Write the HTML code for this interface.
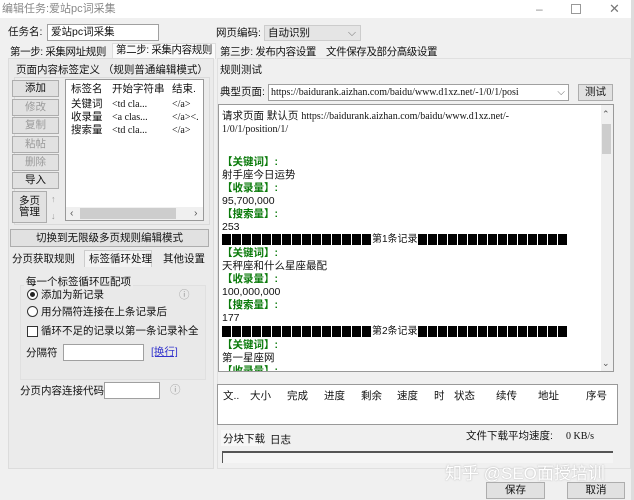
<!DOCTYPE html>
<html><head><meta charset="utf-8"><style>
*{margin:0;padding:0;box-sizing:border-box}
body{width:634px;height:500px;background:#f0f0f0;font-family:"Liberation Sans","Noto Sans CJK SC",sans-serif;font-size:10.5px;line-height:13px;color:#111;position:relative;overflow:hidden}
.a{position:absolute;white-space:nowrap}
.inp{position:absolute;background:#fff;border:1px solid #a0a0a0}
.btn{position:absolute;background:#e1e1e1;border:1px solid #adadad;text-align:center;line-height:15px}
.dis{color:#9a9a9a}
.mono{font-family:"Liberation Serif","Noto Sans CJK SC",serif}
.g{color:#0a7a0a;font-weight:bold}
.bar{font-size:10px;letter-spacing:0}
.blk{display:inline-block;width:9px;height:11px;background:#000;margin-right:1px;vertical-align:middle}
.t{letter-spacing:-0.4px}
</style></head><body>
<div class="a" style="left:0;top:0;width:634px;height:18px;background:#fff"></div>
<div class="a" style="left:2px;top:3px;color:#888;font-size:11px">编辑任务:爱站pc词采集</div>
<div class="a" style="left:536px;top:3px;color:#888;font-size:12px">–</div>
<div class="a" style="left:571px;top:4px;width:10px;height:10px;border:1px solid #999"></div>
<div class="a" style="left:609px;top:2px;color:#777;font-size:13px">✕</div>
<div class="a" style="left:631px;top:0;width:3px;height:500px;background:#ddd"></div>

<div class="a" style="left:8px;top:26px">任务名:</div>
<div class="inp" style="left:47px;top:24px;width:112px;height:17px;padding-left:3px;line-height:15px">爱站pc词采集</div>
<div class="a" style="left:216px;top:27px">网页编码:</div>
<div class="inp" style="left:264px;top:25px;width:97px;height:16px;background:#e5e5e5;border-color:#ccc;padding-left:3px;line-height:14px">自动识别<span style="position:absolute;right:4px;color:#777">⌵</span></div>

<div class="a" style="left:112px;top:43px;width:104px;height:16px;background:#fafafa;border:1px solid #ddd;border-bottom:none"></div>
<div class="a t" style="left:10px;top:46px">第一步: 采集网址规则</div>
<div class="a t" style="left:116px;top:44px">第二步: 采集内容规则</div>
<div class="a t" style="left:220px;top:46px">第三步: 发布内容设置</div>
<div class="a t" style="left:326px;top:46px">文件保存及部分高级设置</div>

<!-- left panel -->
<div class="a" style="left:8px;top:58px;width:206px;height:411px;background:#ebebeb;border:1px solid #dcdcdc"></div>
<div class="a" style="left:14px;top:77px;width:196px;height:148px;border:1px solid #dadada"></div>
<div class="a" style="left:14px;top:64px;background:#ebebeb;padding:0 2px">页面内容标签定义 （规则普通编辑模式）</div>
<div class="btn" style="left:12px;top:80px;width:47px;height:17px">添加</div>
<div class="btn dis" style="left:12px;top:99px;width:47px;height:17px">修改</div>
<div class="btn dis" style="left:12px;top:117px;width:47px;height:17px">复制</div>
<div class="btn dis" style="left:12px;top:136px;width:47px;height:17px">粘帖</div>
<div class="btn dis" style="left:12px;top:154px;width:47px;height:17px">删除</div>
<div class="btn" style="left:12px;top:172px;width:47px;height:17px">导入</div>
<div class="btn" style="left:12px;top:191px;width:35px;height:32px;line-height:11px;padding-top:4px">多页<br>管理</div>
<div class="a dis" style="left:51px;top:193px;font-size:9px">↑</div>
<div class="a dis" style="left:51px;top:210px;font-size:9px">↓</div>
<div class="inp" style="left:65px;top:79px;width:139px;height:142px;border-color:#999"></div>
<div class="a" style="left:71px;top:83px">标签名</div><div class="a" style="left:112px;top:83px">开始字符串</div><div class="a" style="left:172px;top:83px">结束.</div>
<div class="a" style="left:71px;top:98px;line-height:13px">关键词<br>收录量<br>搜索量</div>
<div class="a mono" style="left:112px;top:98px;line-height:13px;font-size:10px">&lt;td cla...<br>&lt;a clas...<br>&lt;td cla...</div>
<div class="a mono" style="left:172px;top:98px;line-height:13px;font-size:10px">&lt;/a&gt;<br>&lt;/a&gt;&lt;.<br>&lt;/a&gt;</div>
<div class="a" style="left:66px;top:207px;width:137px;height:13px;background:#f0f0f0"></div>
<div class="a" style="left:80px;top:208px;width:96px;height:11px;background:#cdcdcd"></div>
<div class="a" style="left:70px;top:207px;color:#555">‹</div><div class="a" style="left:194px;top:207px;color:#555">›</div>
<div class="btn" style="left:10px;top:229px;width:199px;height:18px;line-height:16px">切换到无限级多页规则编辑模式</div>
<div class="a" style="left:12px;top:253px">分页获取规则</div>
<div class="a" style="left:84px;top:250px;width:68px;height:17px;border:1px solid #ccc;border-bottom:none;background:#f3f3f3"></div>
<div class="a" style="left:89px;top:253px">标签循环处理</div>
<div class="a" style="left:163px;top:253px">其他设置</div>
<div class="a" style="left:20px;top:285px;width:186px;height:95px;border:1px solid #e0e0e0;background:#e9e9e9"></div>
<div class="a" style="left:24px;top:276px;background:#ebebeb;padding:0 2px">每一个标签循环匹配项</div>
<div class="a" style="left:27px;top:289px;width:11px;height:11px;border:1px solid #333;border-radius:50%;background:#fff"></div>
<div class="a" style="left:30px;top:292px;width:5px;height:5px;border-radius:50%;background:#222"></div>
<div class="a" style="left:41px;top:289px">添加为新记录</div>
<div class="a" style="left:179px;top:289px;color:#999">ⓘ</div>
<div class="a" style="left:27px;top:306px;width:11px;height:11px;border:1px solid #333;border-radius:50%;background:#fff"></div>
<div class="a" style="left:41px;top:306px">用分隔符连接在上条记录后</div>
<div class="a" style="left:27px;top:326px;width:11px;height:11px;border:1px solid #333;background:#fff"></div>
<div class="a" style="left:41px;top:325px">循环不足的记录以第一条记录补全</div>
<div class="a" style="left:26px;top:347px">分隔符</div>
<div class="inp" style="left:63px;top:344px;width:81px;height:17px"></div>
<div class="a" style="left:151px;top:346px;color:#33c;text-decoration:underline">[换行]</div>
<div class="a" style="left:20px;top:385px">分页内容连接代码</div>
<div class="inp" style="left:104px;top:382px;width:56px;height:17px"></div>
<div class="a" style="left:170px;top:384px;color:#999">ⓘ</div>

<!-- right -->
<div class="a" style="left:217px;top:58px;width:414px;height:411px;border:1px solid #e0e0e0"></div>
<div class="a" style="left:220px;top:64px">规则测试</div>
<div class="a" style="left:220px;top:86px">典型页面:</div>
<div class="inp mono" style="left:268px;top:84px;width:301px;height:17px;font-size:10px;padding-left:2px;line-height:15px;overflow:hidden">https://baidurank.aizhan.com/baidu/www.d1xz.net/-1/0/1/posi<span style="position:absolute;right:3px;color:#666">⌵</span></div>
<div class="btn" style="left:578px;top:84px;width:35px;height:17px">测试</div>
<div class="inp" style="left:218px;top:104px;width:396px;height:268px;border-color:#999;overflow:hidden">
<div class="a" style="left:382px;top:0;width:12px;height:266px;background:#f0f0f0"></div>
<div class="a" style="left:383px;top:19px;width:9px;height:30px;background:#cdcdcd"></div>
<div class="a" style="left:383px;top:3px;font-size:9px;color:#555">⌃</div>
<div class="a" style="left:383px;top:252px;font-size:9px;color:#555">⌄</div>
<div class="a" style="left:3px;top:5px;line-height:12px"><span>请求页面 默认页 </span><span class="mono" style="font-size:10px">https://baidurank.aizhan.com/baidu/www.d1xz.net/-<br>1/0/1/position/1/</span></div>
<div class="a" style="left:3px;top:51px;line-height:12.9px;font-size:10.5px">
<span class="g">【关键词】:</span><br>射手座今日运势<br><span class="g">【收录量】:</span><br>95,700,000<br><span class="g">【搜索量】:</span><br>253<br>
<span class="bar"><i class="blk"></i><i class="blk"></i><i class="blk"></i><i class="blk"></i><i class="blk"></i><i class="blk"></i><i class="blk"></i><i class="blk"></i><i class="blk"></i><i class="blk"></i><i class="blk"></i><i class="blk"></i><i class="blk"></i><i class="blk"></i><i class="blk"></i>第1条记录<i class="blk"></i><i class="blk"></i><i class="blk"></i><i class="blk"></i><i class="blk"></i><i class="blk"></i><i class="blk"></i><i class="blk"></i><i class="blk"></i><i class="blk"></i><i class="blk"></i><i class="blk"></i><i class="blk"></i><i class="blk"></i><i class="blk"></i></span><br>
<span class="g">【关键词】:</span><br>天秤座和什么星座最配<br><span class="g">【收录量】:</span><br>100,000,000<br><span class="g">【搜索量】:</span><br>177<br>
<span class="bar"><i class="blk"></i><i class="blk"></i><i class="blk"></i><i class="blk"></i><i class="blk"></i><i class="blk"></i><i class="blk"></i><i class="blk"></i><i class="blk"></i><i class="blk"></i><i class="blk"></i><i class="blk"></i><i class="blk"></i><i class="blk"></i><i class="blk"></i>第2条记录<i class="blk"></i><i class="blk"></i><i class="blk"></i><i class="blk"></i><i class="blk"></i><i class="blk"></i><i class="blk"></i><i class="blk"></i><i class="blk"></i><i class="blk"></i><i class="blk"></i><i class="blk"></i><i class="blk"></i><i class="blk"></i><i class="blk"></i></span><br>
<span class="g">【关键词】:</span><br>第一星座网<br><span class="g">【收录量】:</span>
</div></div>
<div class="inp" style="left:217px;top:384px;width:401px;height:41px;border-color:#999"></div>
<div class="a" style="left:223px;top:390px">文..</div><div class="a" style="left:250px;top:390px">大小</div><div class="a" style="left:287px;top:390px">完成</div><div class="a" style="left:324px;top:390px">进度</div><div class="a" style="left:361px;top:390px">剩余</div><div class="a" style="left:397px;top:390px">速度</div><div class="a" style="left:434px;top:390px">时</div><div class="a" style="left:454px;top:390px">状态</div><div class="a" style="left:496px;top:390px">续传</div><div class="a" style="left:538px;top:390px">地址</div><div class="a" style="left:586px;top:390px">序号</div>
<div class="a" style="left:221px;top:430px;width:42px;height:16px;background:#f7f7f7"></div>
<div class="a" style="left:223px;top:433px">分块下载</div>
<div class="a" style="left:270px;top:434px">日志</div>
<div class="a" style="left:466px;top:430px">文件下载平均速度: </div>
<div class="a mono" style="left:566px;top:430px;font-size:10px">0 KB/s</div>
<div class="a" style="left:222px;top:451px;width:391px;height:12px;border-top:2px solid #555;border-left:1px solid #555;background:#f5f5f5"></div>
<div class="a" style="left:445px;top:464px;font-size:17px;line-height:20px;color:#fff;text-shadow:0 0 1px #bbb,0 0 2px #ccc">知乎 @SEO面授培训</div>
<div class="btn" style="left:486px;top:482px;width:59px;height:17px">保存</div>
<div class="btn" style="left:567px;top:482px;width:58px;height:17px">取消</div>
</body></html>
